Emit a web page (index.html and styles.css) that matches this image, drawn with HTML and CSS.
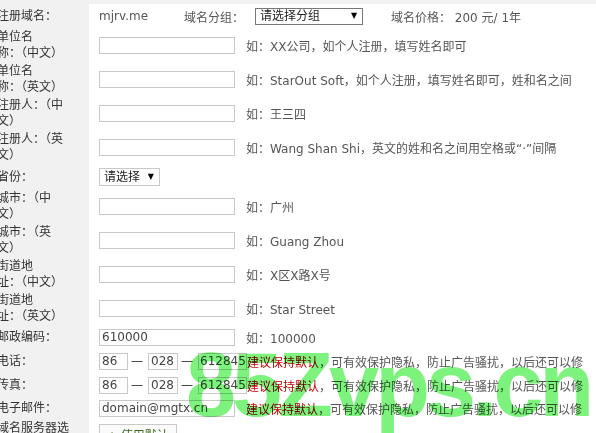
FILE: index.html
```html
<!DOCTYPE html>
<html lang="zh-CN">
<head>
  <meta charset="UTF-8" />
  <title>域名注册信息</title>
  <link rel="stylesheet" href="styles.css">
</head>
<body>
  <div class="form">
    <div class="row first">
      <div class="label">注册域名：</div>
      <div class="value">
        <span class="domain">mjrv.me</span>
        <span class="inline-label">域名分组：</span>
        <span class="select group-select">
          <select><option>请选择分组</option></select>
        </span>
        <span class="price">域名价格： 200 元/ 1年</span>
      </div>
    </div>
    <div class="row">
      <div class="label">单位名<br>称：（中文）</div>
      <div class="value"><input type="text" class="wide"><span class="hint">如：XX公司，如个人注册，填写姓名即可</span></div>
    </div>
    <div class="row">
      <div class="label">单位名<br>称：（英文）</div>
      <div class="value"><input type="text" class="wide"><span class="hint">如：StarOut Soft，如个人注册，填写姓名即可，姓和名之间</span></div>
    </div>
    <div class="row">
      <div class="label">注册人：（中<br>文）</div>
      <div class="value"><input type="text" class="wide"><span class="hint">如：王三四</span></div>
    </div>
    <div class="row">
      <div class="label">注册人：（英<br>文）</div>
      <div class="value"><input type="text" class="wide"><span class="hint">如：Wang Shan Shi，英文的姓和名之间用空格或“·”间隔</span></div>
    </div>
    <div class="row tall">
      <div class="label">省份：</div>
      <div class="value">
        <span class="select province-select">
          <select><option>请选择</option></select>
        </span>
      </div>
    </div>
    <div class="row">
      <div class="label">城市：（中<br>文）</div>
      <div class="value"><input type="text" class="wide"><span class="hint">如：广州</span></div>
    </div>
    <div class="row">
      <div class="label">城市：（英<br>文）</div>
      <div class="value"><input type="text" class="wide"><span class="hint">如：Guang Zhou</span></div>
    </div>
    <div class="row">
      <div class="label">街道地<br>址：（中文）</div>
      <div class="value"><input type="text" class="wide"><span class="hint">如：X区X路X号</span></div>
    </div>
    <div class="row">
      <div class="label">街道地<br>址：（英文）</div>
      <div class="value"><input type="text" class="wide"><span class="hint">如：Star Street</span></div>
    </div>
    <div class="row">
      <div class="label">邮政编码：</div>
      <div class="value"><input type="text" class="wide" value="610000"><span class="hint">如：100000</span></div>
    </div>
    <div class="row">
      <div class="label">电话：</div>
      <div class="value">
        <input type="text" class="code" value="86"><span class="dash">一</span><input type="text" class="area" value="028"><span class="dash">一</span><input type="text" class="number" value="6128456"><span class="note"><em>建议保持默认</em>，可有效保护隐私，防止广告骚扰，以后还可以修</span>
      </div>
    </div>
    <div class="row">
      <div class="label">传真：</div>
      <div class="value">
        <input type="text" class="code" value="86"><span class="dash">一</span><input type="text" class="area" value="028"><span class="dash">一</span><input type="text" class="number" value="6128456"><span class="note"><em>建议保持默认</em>，可有效保护隐私，防止广告骚扰，以后还可以修</span>
      </div>
    </div>
    <div class="row short">
      <div class="label">电子邮件：</div>
      <div class="value"><input type="text" class="wide" value="domain@mgtx.cn"><span class="hint note"><em>建议保持默认</em>，可有效保护隐私，防止广告骚扰，以后还可以修</span></div>
    </div>
    <div class="row">
      <div class="label">域名服务器选<br>择：</div>
      <div class="value top"><button type="button" class="dns-btn">+ 使用默认</button></div>
    </div>
  </div>

  <div class="watermark">85Zvps.cn</div>
</body>
</html>
```

FILE: styles.css
```css
body {
  margin: 0;
  background: #f1f1f1;
  font-family: "DejaVu Sans", "Noto Sans CJK SC", sans-serif;
  font-size: 12px;
  color: #333;
  overflow: hidden;
}
.form {
  margin: 4px 0 0 -3px;
}
.row {
  display: grid;
  grid-template-columns: 92px 1fr;
  min-height: 24px;
}
.row.tall {
  min-height: 25px;
}
.row.first {
  min-height: 24px;
}
.row.short {
  min-height: 22px;
}
.label {
  display: flex;
  align-items: center;
  padding: 1px 0;
  line-height: 16px;
  white-space: nowrap;
}
.value {
  display: flex;
  align-items: center;
  background: #fff;
  padding: 3px 0 3px 10px;
  white-space: nowrap;
  overflow: hidden;
}
.row.short .value {
  padding: 2px 0 2px 10px;
}
.value.top {
  align-items: flex-start;
  padding-top: 5px;
}
input[type="text"] {
  box-sizing: border-box;
  height: 17px;
  margin: 0;
  padding: 0 2px;
  border: 1px solid #c9c9c9;
  font-family: inherit;
  font-size: 12px;
  color: #444;
  background: #fff;
}
.wide {
  width: 136px;
}
.code {
  width: 29px;
}
.area {
  width: 30px;
}
input.number {
  width: 49px;
  padding: 0 0 0 1px;
}
.dash {
  margin: 0 5px 0 3px;
  color: #444;
}
.hint {
  margin-left: 11px;
  color: #555;
}
.note {
  color: #555;
}
.note em {
  font-style: normal;
  color: #c40000;
}
.domain {
  color: #555;
  margin-right: 36px;
}
.inline-label {
  color: #555;
  margin-right: 11px;
}
.price {
  color: #555;
  margin-left: 28px;
}
.select {
  position: relative;
  display: inline-block;
}
.select select {
  appearance: none;
  -webkit-appearance: none;
  box-sizing: border-box;
  margin: 0;
  padding: 0 4px;
  font-family: inherit;
  font-size: 12px;
  color: #222;
  background: #fff;
  border-radius: 0;
}
.select::after {
  content: "▼";
  position: absolute;
  top: 3px;
  font-size: 8px;
  color: #000;
  pointer-events: none;
}
.group-select select {
  width: 108px;
  height: 17px;
  border: 1px solid #777;
}
.group-select::after {
  right: 6px;
}
.province-select select {
  width: 61px;
  height: 18px;
  border: 1px solid #c9c9c9;
}
.province-select::after {
  top: 4px;
  right: 6px;
}
.dns-btn {
  height: 20px;
  padding: 0 7px;
  border: 1px solid #c9c9c9;
  background: #fafafa;
  font-family: inherit;
  font-size: 12px;
  color: #3a6a1a;
}
.watermark {
  position: absolute;
  left: 186px;
  top: 340px;
  font-family: "Liberation Sans", Arial, sans-serif;
  font-weight: bold;
  font-size: 90px;
  letter-spacing: -4px;
  line-height: 1;
  color: #7df27d;
  mix-blend-mode: multiply;
  pointer-events: none;
}
```
